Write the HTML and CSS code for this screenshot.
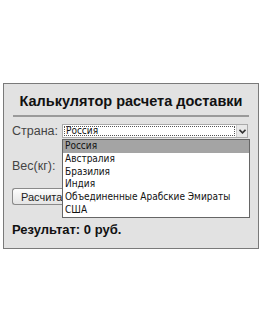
FILE: index.html
```html
<!DOCTYPE html>
<html lang="ru">
<head>
  <meta charset="UTF-8">
  <title>Калькулятор расчета доставки</title>
  <link rel="stylesheet" href="styles.css">
</head>
<body>

  <div class="calc">
    <h2 class="title">Калькулятор расчета доставки</h2>
    <div class="rule"></div>

    <div class="row">
      <span class="label">Страна:</span>
      <div class="select">
        <span class="select-text">Россия</span>
        <span class="select-btn">
          <svg width="7" height="5" viewBox="0 0 7 5"><path d="M0.5 0.8 L3.5 3.8 L6.5 0.8" fill="none" stroke="#333" stroke-width="1.6"/></svg>
        </span>
      </div>
    </div>

    <div class="row row-weight">
      <span class="label">Вес(кг):</span>
      <div class="input"></div>
    </div>

    <button class="btn">Расчитать</button>

    <div class="result">Результат: 0 руб.</div>

    <ul class="list">
      <li class="active">Россия</li>
      <li>Австралия</li>
      <li>Бразилия</li>
      <li>Индия</li>
      <li>Объединенные Арабские Эмираты</li>
      <li>США</li>
    </ul>
  </div>

</body>
</html>
```

FILE: styles.css
```css
body {
  margin: 0;
  background: #fff;
  font-family: "Liberation Sans", Arial, sans-serif;
  color: #222;
}

.calc {
  position: relative;
  box-sizing: border-box;
  width: 256px;
  height: 166px;
  margin: 83px 0 0 3px;
  padding: 9px 8px 0;
  background: #e2e2e2;
  border: 1px solid #7a7a7a;
}

.title {
  margin: 0;
  font-size: 14.5px;
  line-height: 17px;
  text-align: center;
  color: #111;
}

.rule {
  height: 2px;
  margin: 5px 1px 0;
  background: #9a9a9a;
}

.row {
  display: flex;
  align-items: center;
  margin-top: 7px;
  height: 14px;
}

.label {
  width: 50px;
  font-size: 12.5px;
  color: #444;
}

.select {
  display: flex;
  width: 186px;
  height: 14px;
  background: #fff;
  border: 1px solid #aaa;
  box-sizing: border-box;
}

.select-text {
  flex: 1;
  display: flex;
  align-items: center;
  margin: 1px;
  border: 1px dotted #555;
  font-family: "DejaVu Sans Condensed", "DejaVu Sans", sans-serif;
  font-size: 10px;
  line-height: 10px;
  padding-left: 1px;
  color: #111;
}

.select-btn {
  width: 10px;
  display: flex;
  align-items: center;
  justify-content: center;
  background: #e8e8e8;
  border-left: 1px solid #ccc;
}

.row-weight {
  margin-top: 20px;
  height: 16px;
}

.input {
  width: 120px;
  height: 16px;
  background: #fff;
  border: 1px solid #999;
  box-sizing: border-box;
}

.btn {
  display: block;
  margin-top: 14px;
  width: 50px;
  height: 17px;
  padding: 0 0 0 8px;
  overflow: hidden;
  white-space: nowrap;
  text-align: left;
  font-family: "Liberation Sans", Arial, sans-serif;
  font-size: 11px;
  color: #222;
  background: linear-gradient(#fdfdfd, #e4e4e4);
  border: 1px solid #8a8a8a;
  border-right: none;
  border-radius: 3px 0 0 3px;
}

.result {
  margin-top: 17px;
  font-size: 13px;
  font-weight: bold;
  color: #111;
}

.list {
  position: absolute;
  left: 58px;
  top: 55px;
  width: 188px;
  height: 79px;
  box-sizing: border-box;
  margin: 0;
  padding: 0;
  list-style: none;
  background: #fff;
  border: 1px solid #666;
  font-family: "DejaVu Sans Condensed", "DejaVu Sans", sans-serif;
  font-size: 10px;
  color: #111;
}

.list li {
  height: 12.8px;
  line-height: 12.8px;
  padding-left: 2px;
  white-space: nowrap;
}

.list li.active {
  background: #a4a4a4;
}
```
